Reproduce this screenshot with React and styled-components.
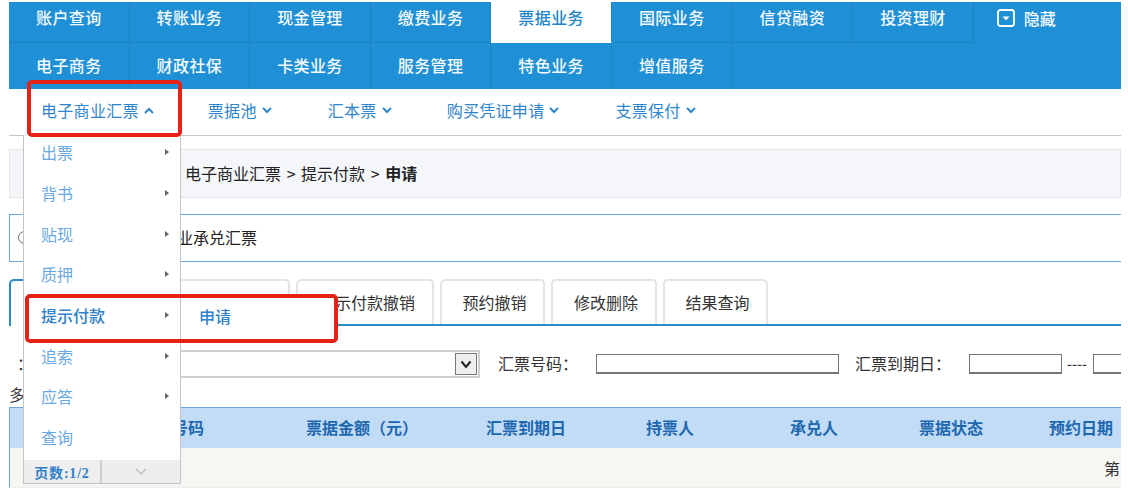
import React from "react";
import styled, { createGlobalStyle } from "styled-components";

const Global = createGlobalStyle`
  html, body { margin: 0; padding: 0; background: #fff; }
  body { font-family: "Noto Sans CJK SC", "Liberation Sans", sans-serif; overflow: hidden; }
  * { box-sizing: border-box; }
`;
const Page = styled.div`position: relative; width: 1128px; height: 500px; padding: 2px 7px 0 9px; overflow: hidden;`;
const Nav = styled.nav`display: flex; flex-direction: column; height: 87px; background: #2090d6;`;
const NavRow = styled.div`display: flex; height: ${p => p.$h}px; flex-shrink: 0;`;
const NavItem = styled.a`
  width: 120.6px; height: 100%; display: flex; align-items: center; justify-content: center;
  padding-bottom: ${p => p.$pb}px; letter-spacing: 0.4px;
  font-size: 16px; font-weight: 500; color: ${p => p.$active ? "#1f86c8" : "#f4fafe"};
  background: ${p => p.$active ? "#fff" : "transparent"};
  border-right: 1px solid #1c82c2; border-bottom: ${p => p.$line ? `1px solid ${p.$active ? "#fff" : "#1c82c2"}` : "0"};
`;
const HideItem = styled.a`display: flex; align-items: center; gap: 9px; height: 32px; padding-left: 23px; font-size: 16px; font-weight: 500; color: #f4fafe;`;
const SubNav = styled.div`display: flex; align-items: center; height: 47px; border-bottom: 1px solid #c8c8c8; font-size: 16px; letter-spacing: 0.3px; color: #2f86cc; padding-bottom: 4px;`;
const SubItem = styled.span`display: inline-flex; align-items: center; gap: 5px; margin-left: ${p => p.$left}px; white-space: nowrap;`;
const Crumb = styled.div`margin-top: 13px; height: 49px; padding-left: 91px; background: #f5f6fa; border: 1px solid #e6e6e6; font-size: 16px; word-spacing: 2px; line-height: 46px; color: #222; white-space: nowrap;`;
const Notice = styled.div`margin-top: 16px; height: 48px; display: flex; align-items: center; border: 1px solid #6ea6d6; border-right: 0; padding-left: 8px; padding-bottom: 2px; font-size: 16px; color: #222;`;
const Radio = styled.i`width: 13px; height: 13px; border: 1px solid #666; border-radius: 50%; flex-shrink: 0;`;
const NoticeText = styled.span`margin-left: 98px; white-space: nowrap;`;
const Tabs = styled.div`margin-top: 17px; height: 47px; display: flex; gap: 6px; align-items: flex-end; border-bottom: 2px solid #2a8cc4;`;
const Tab = styled.div`
  height: 45px; width: ${p => p.$w}px; display: flex; align-items: center; justify-content: center; padding: 0 0 2px 4px; font-size: 16px; color: #333; background: #fff;
  border: 2px solid #e4e4e4; border-bottom: 0; border-radius: 5px 5px 0 0;
  ${p => p.$active && "border-color: #2a8cc4; color: #2f86cc; margin-bottom: -2px; height: 47px;"}
`;
const Filter = styled.div`display: flex; align-items: center; height: 52px; padding-top: 24px; font-size: 16px; color: #333; overflow: hidden;`;
const Colon = styled.span`margin: 0 0 3px 8px; width: 16px; flex-shrink: 0;`;
const Select = styled.div`width: 420px; margin-left: 27px; height: 28px; flex-shrink: 0; border: 2px solid #cfcfcf; display: flex; justify-content: flex-end; align-items: center; padding-right: 1px; background: #fff;`;
const SelectArrow = styled.div`width: 22px; height: 22px; background: #eee; border: 1px solid #777; display: flex; align-items: center; justify-content: center;`;
const FieldLabel = styled.span`margin: 0 0 3px ${p => p.$m}px; white-space: nowrap; flex-shrink: 0;`;
const Input = styled.div`height: 20px; width: ${p => p.$w}px; margin-left: ${p => p.$m || 0}px; flex-shrink: 0; border: 1px solid #777; border-bottom-width: 2px; background: #fff;`;
const Dash = styled.span`margin: 0 0 2px 5px; width: 26px; font-size: 14px; font-weight: 500; color: #333; flex-shrink: 0;`;
const Multi = styled.div`height: 29px; font-size: 16px; color: #333; line-height: 32px;`;
const Table = styled.div`border-left: 1px solid #6ea6d6; height: 81px; border-bottom: 1px solid #eee;`;
const Head = styled.div`display: flex; align-items: center; height: 41px; padding-left: 130px; padding-bottom: 2px; background: #c2dcf5; border-top: 1px solid #6ea6d6; font-size: 16px; font-weight: 700; color: #1e68b0; white-space: nowrap;`;
const HeadCell = styled.span`margin-left: ${p => p.$gap}px; flex-shrink: 0;`;
const Body = styled.div`height: 39px; background: #f6f7f3; display: flex; align-items: center; justify-content: flex-end; font-size: 16px; color: #333; padding-right: 1px;`;

const Menu = styled.div`position: absolute; left: 23px; top: 135px; width: 158px; height: 349px; background: #fff; border: 1px solid #c4c4c4; border-top: 0; display: flex; flex-direction: column;`;
const MenuList = styled.div`flex: 1; margin-top: -3px;`;
const MenuItem = styled.div`height: 40.7px; display: flex; align-items: center; justify-content: space-between; padding: 0 11px 0 17px; font-size: 16px; font-weight: ${p => p.$on ? 500 : 400}; color: ${p => p.$on ? "#2f80c8" : "#6aa9e0"};`;
const Arrow = styled.i`width: 0; height: 0; border-left: 4px solid #666; border-top: 3.5px solid transparent; border-bottom: 3.5px solid transparent;`;
const Pager = styled.div`height: 23px; display: flex; background: #eeeeee; font-family: "Liberation Serif", "Noto Sans CJK SC", serif; font-size: 14px; font-weight: 700; letter-spacing: 0.8px; color: #2f80c8;`;
const PagerText = styled.div`width: 78px; display: flex; align-items: center; justify-content: center; border-right: 2px solid #cfcfcf; white-space: nowrap;`;
const PagerNext = styled.div`flex: 1; display: flex; align-items: center; justify-content: center;`;
const SubMenu = styled.div`position: absolute; left: 181px; top: 297px; width: 154px; height: 43px; padding: 0 0 5px 18px; display: flex; align-items: center; background: #fff; font-size: 16px; font-weight: 500; color: #2f80c8;`;
const Callout = styled.div`position: absolute; left: ${p => p.$x}px; top: ${p => p.$y}px; width: ${p => p.$w}px; height: ${p => p.$h}px; border: 4px solid #e62117; border-radius: 5px; pointer-events: none;`;

const Chev = ({ up }) => (
  <svg width="10" height="7" viewBox="0 0 10 7" fill="none" stroke="#2f86cc" strokeWidth="2">
    <path d={up ? "M1 6l4-4 4 4" : "M1 1l4 4 4-4"} />
  </svg>
);

const top1 = ["账户查询", "转账业务", "现金管理", "缴费业务", "票据业务", "国际业务", "信贷融资", "投资理财"];
const top2 = ["电子商务", "财政社保", "卡类业务", "服务管理", "特色业务", "增值服务"];
const menu = ["出票", "背书", "贴现", "质押", "提示付款", "追索", "应答", "查询"];
const heads = [["票据号码", 0], ["票据金额（元）", 102], ["汇票到期日", 68], ["持票人", 80], ["承兑人", 96], ["票据状态", 81], ["预约日期", 66]];

export default function App() {
  return (
    <Page>
      <Global />
      <Nav>
        <NavRow $h={41}>
          {top1.map(t => <NavItem key={t} $line $pb={10} $active={t === "票据业务"}>{t}</NavItem>)}
          <HideItem>
            <svg width="18" height="18" viewBox="0 0 18 18" fill="none">
              <rect x="1" y="1" width="16" height="16" rx="2.5" stroke="#fff" strokeWidth="1.8" />
              <path d="M5.5 7.5h7L9 11.5z" fill="#fff" />
            </svg>
            隐藏
          </HideItem>
        </NavRow>
        <NavRow $h={46}>
          {top2.map(t => <NavItem key={t} $pb={2}>{t}</NavItem>)}
        </NavRow>
      </Nav>
      <SubNav>
        <SubItem $left={32}>电子商业汇票 <Chev up /></SubItem>
        <SubItem $left={54}>票据池 <Chev /></SubItem>
        <SubItem $left={56}>汇本票 <Chev /></SubItem>
        <SubItem $left={55}>购买凭证申请 <Chev /></SubItem>
        <SubItem $left={56}>支票保付 <Chev /></SubItem>
      </SubNav>
      <Crumb>
        票据业务 &gt; 电子商业汇票 &gt; 提示付款 &gt; <b>申请</b>
      </Crumb>
      <Notice>
        <Radio />
        <NoticeText>电子商业承兑汇票</NoticeText>
      </Notice>
      <Tabs>
        <Tab $active $w={137}>申请</Tab>
        <Tab $w={138}>批量申请</Tab>
        <Tab $w={138}>提示付款撤销</Tab>
        <Tab $w={105}>预约撤销</Tab>
        <Tab $w={106}>修改删除</Tab>
        <Tab $w={105}>结果查询</Tab>
      </Tabs>
      <Filter>
        <Colon>：</Colon>
        <Select>
          <SelectArrow>
            <svg width="12" height="9" viewBox="0 0 12 9" fill="none" stroke="#222" strokeWidth="2"><path d="M1.5 1.5L6 7l4.5-5.5" /></svg>
          </SelectArrow>
        </Select>
        <FieldLabel $m={18}>汇票号码：</FieldLabel>
        <Input $w={243} $m={18} />
        <FieldLabel $m={16}>汇票到期日：</FieldLabel>
        <Input $w={93} $m={18} />
        <Dash>----</Dash>
        <Input $w={60} />
      </Filter>
      <Multi>多</Multi>
      <Table>
        <Head>{heads.map(([h, g]) => <HeadCell key={h} $gap={g}>{h}</HeadCell>)}</Head>
        <Body>第</Body>
      </Table>
      <Menu>
        <MenuList>
          {menu.map(m => (
            <MenuItem key={m} $on={m === "提示付款"}>{m}{m !== "查询" && <Arrow />}</MenuItem>
          ))}
        </MenuList>
        <Pager>
          <PagerText>页数:1/2</PagerText>
          <PagerNext>
            <svg width="12" height="7" viewBox="0 0 12 7" fill="none" stroke="#b8b8b8" strokeWidth="1.2"><path d="M1 1l5 5 5-5" /></svg>
          </PagerNext>
        </Pager>
      </Menu>
      <SubMenu>申请</SubMenu>
      <Callout $x={27} $y={80} $w={155} $h={57} />
      <Callout $x={25} $y={294} $w={313} $h={49} />
    </Page>
  );
}
